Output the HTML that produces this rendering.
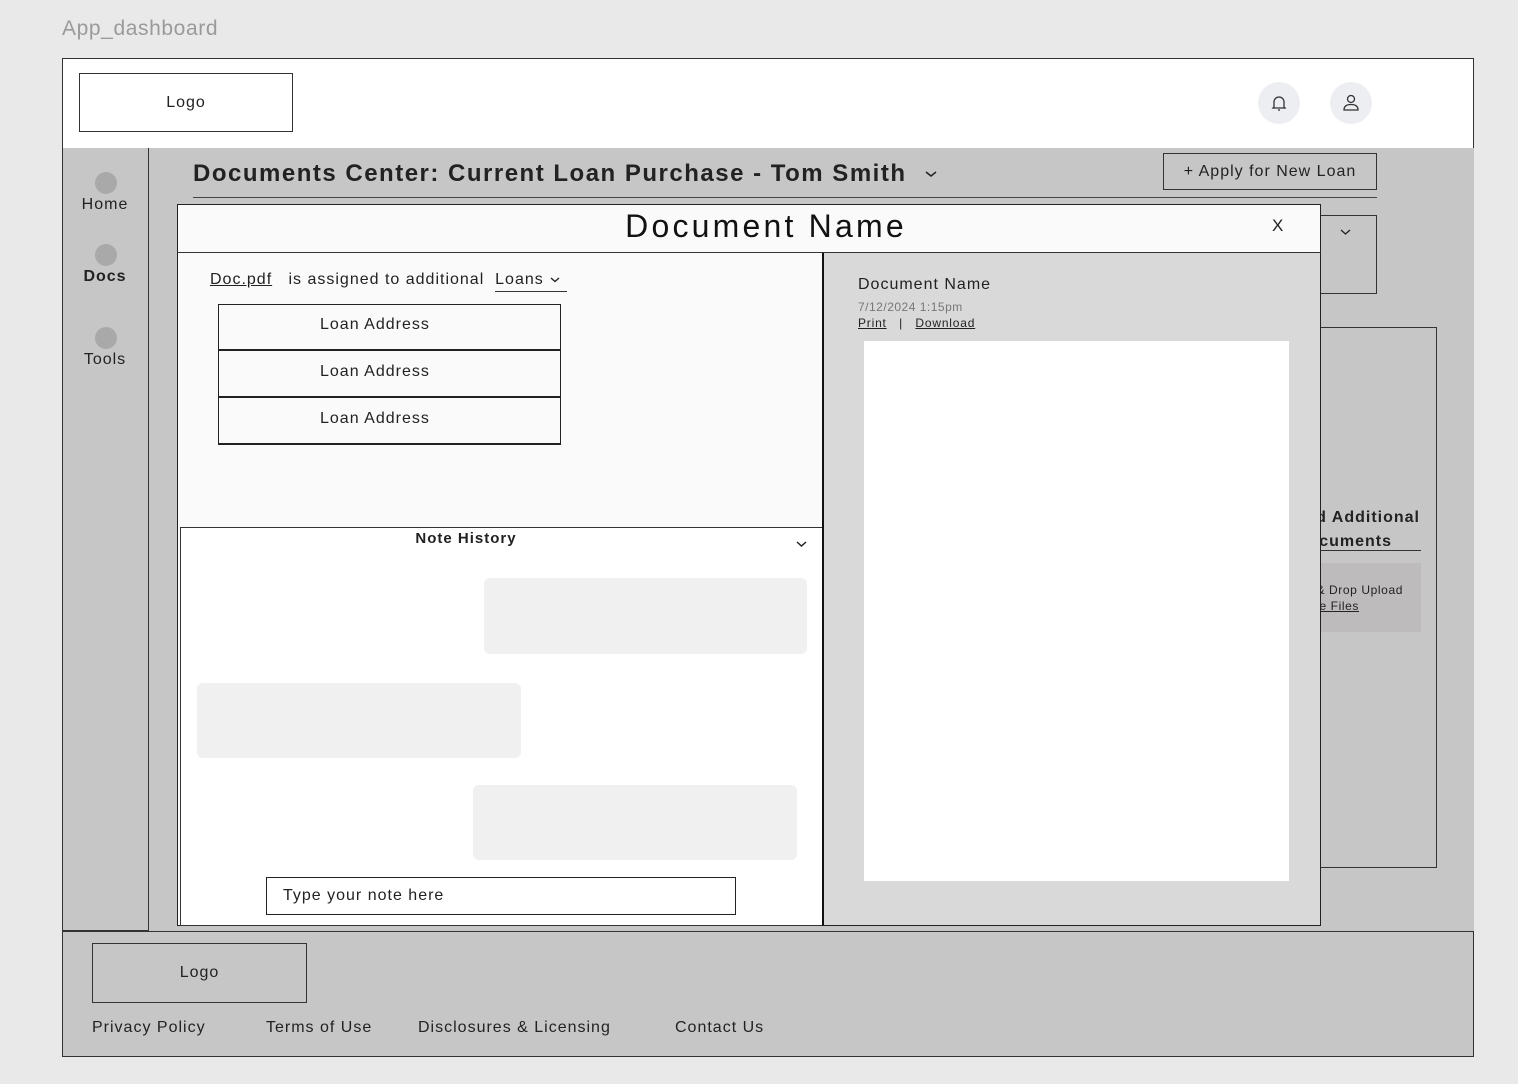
<!DOCTYPE html>
<html><head><meta charset="utf-8"><style>
*{box-sizing:border-box;margin:0;padding:0}
body{width:1518px;height:1084px;background:#e9e9e9;font-family:"Liberation Sans",sans-serif;color:#222;position:relative;overflow:hidden;letter-spacing:1px}
.a{position:absolute}
.c{display:flex;align-items:center;justify-content:center}
.r{white-space:nowrap}
</style></head><body>
<div class="a" style="left:62px;top:17px;font-size:21px;color:#9a9a9a;letter-spacing:0.6px">App_dashboard</div>
<!-- header -->
<div class="a" style="left:62px;top:58px;width:1412px;height:91px;background:#fff;border:1px solid #333"></div>
<div class="a c" style="left:79px;top:73px;width:214px;height:59px;border:1px solid #333;font-size:16px">Logo</div>
<div class="a c" style="left:1258px;top:82px;width:42px;height:42px;border-radius:50%;background:#eceef2">
<svg width="16" height="17" viewBox="0 0 16 17" fill="none" stroke="#333" stroke-width="1.3"><path d="M3 12V7a5 5 0 0 1 10 0v5l1 1H2z"/><path d="M7 15h2"/></svg></div>
<div class="a c" style="left:1330px;top:82px;width:42px;height:42px;border-radius:50%;background:#eceef2">
<svg width="18" height="18" viewBox="0 0 18 18" fill="none" stroke="#333" stroke-width="1.3"><circle cx="9" cy="5" r="3.5"/><path d="M2 16c0-4 3-5.5 7-5.5s7 1.5 7 5.5z"/></svg></div>
<!-- main -->
<div class="a" style="left:62px;top:148px;width:1412px;height:783px;background:#c6c6c6"></div>
<div class="a" style="left:62px;top:148px;width:87px;height:783px;border:1px solid #333;border-top:none"></div>
<div class="a" style="left:95px;top:172px;width:22px;height:22px;border-radius:50%;background:#a9a9a9"></div>
<div class="a" style="left:62px;top:196px;width:86px;text-align:center;font-size:16px">Home</div>
<div class="a" style="left:95px;top:244px;width:22px;height:22px;border-radius:50%;background:#a9a9a9"></div>
<div class="a" style="left:62px;top:268px;width:86px;text-align:center;font-size:16px;font-weight:bold">Docs</div>
<div class="a" style="left:95px;top:327px;width:22px;height:22px;border-radius:50%;background:#a9a9a9"></div>
<div class="a" style="left:62px;top:351px;width:86px;text-align:center;font-size:16px">Tools</div>
<div class="a r" style="left:193px;top:160px;font-size:24px;font-weight:bold;color:#222;letter-spacing:1.5px">Documents Center: Current Loan Purchase - Tom Smith</div>
<svg class="a" style="left:924px;top:169px" width="14" height="10" viewBox="0 0 14 10" fill="none" stroke="#222" stroke-width="1.5"><path d="M2 3l5 4 5-4"/></svg>
<div class="a" style="left:193px;top:197px;width:1184px;height:1px;background:#444"></div>
<div class="a c" style="left:1163px;top:153px;width:214px;height:37px;border:1px solid #333;font-size:16px">+ Apply for New Loan</div>
<div class="a" style="left:1200px;top:215px;width:177px;height:79px;border:1px solid #333"></div>
<svg class="a" style="left:1339px;top:228px" width="13" height="9" viewBox="0 0 13 9" fill="none" stroke="#222" stroke-width="1.3"><path d="M2 2l4.5 4 4.5-4"/></svg>
<div class="a" style="left:1200px;top:327px;width:237px;height:541px;border:1px solid #333"></div>
<div class="a r" style="right:98px;top:506px;font-size:16px;font-weight:bold;line-height:24px">Add Additional</div>
<div class="a r" style="right:126px;top:530px;font-size:16px;font-weight:bold;line-height:24px">Documents</div>
<div class="a" style="left:1240px;top:550px;width:181px;height:1px;background:#333"></div>
<div class="a" style="left:1240px;top:563px;width:181px;height:69px;background:#bdbbbc"></div>
<div class="a r" style="right:115px;top:582px;font-size:12px;line-height:16px;letter-spacing:0.6px">Drag &amp; Drop Upload</div>
<div class="a r" style="right:159px;top:598px;font-size:12px;line-height:16px;letter-spacing:0.6px"><u>Browse Files</u></div>
<!-- modal -->
<div class="a" style="left:177px;top:204px;width:1144px;height:722px;background:#fafafa;border:1px solid #222"></div>
<div class="a" style="left:177px;top:252px;width:1144px;height:1px;background:#333"></div>
<div class="a r" style="left:177px;top:208px;width:1178px;text-align:center;font-size:32px;color:#111;letter-spacing:3.2px">Document Name</div>
<div class="a" style="left:1272px;top:216px;font-size:17px">X</div>
<div class="a r" style="left:210px;top:271px;font-size:16px"><u>Doc.pdf</u>&nbsp;&nbsp; is assigned to additional&nbsp;&nbsp;<span style="border-bottom:1px solid #333;padding-bottom:2px;display:inline-block">Loans <svg width="12" height="8" viewBox="0 0 12 8" fill="none" stroke="#222" stroke-width="1.4"><path d="M2 2l4 3.5 4-3.5"/></svg>&nbsp;</span></div>
<div class="a" style="left:218px;top:304px;width:343px;height:47px;border:1.5px solid #222;border-bottom-width:2px;font-size:16px;padding-left:101px;padding-top:11px">Loan Address</div>
<div class="a" style="left:218px;top:350px;width:343px;height:48px;border:1.5px solid #222;border-bottom-width:2px;font-size:16px;padding-left:101px;padding-top:12px">Loan Address</div>
<div class="a" style="left:218px;top:397px;width:343px;height:48px;border:1.5px solid #222;border-bottom-width:2px;font-size:16px;padding-left:101px;padding-top:12px">Loan Address</div>
<!-- note history -->
<div class="a" style="left:180px;top:527px;width:643px;height:399px;background:#fff;border:1px solid #333"></div>
<div class="a" style="left:180px;top:530px;width:572px;text-align:center;font-size:15px;font-weight:bold">Note History</div>
<svg class="a" style="left:795px;top:540px" width="13" height="9" viewBox="0 0 13 9" fill="none" stroke="#222" stroke-width="1.5"><path d="M2 2l4.5 4 4.5-4"/></svg>
<div class="a" style="left:484px;top:578px;width:323px;height:76px;background:#f0f0f0;border-radius:6px"></div>
<div class="a" style="left:197px;top:683px;width:324px;height:75px;background:#f0f0f0;border-radius:6px"></div>
<div class="a" style="left:473px;top:785px;width:324px;height:75px;background:#f0f0f0;border-radius:6px"></div>
<div class="a" style="left:266px;top:877px;width:470px;height:38px;border:1px solid #222;font-size:16px;padding:9px 0 0 16px">Type your note here</div>
<!-- viewer -->
<div class="a" style="left:822px;top:253px;width:499px;height:673px;background:#d9d9d9;border-left:2px solid #111;border-right:1px solid #222;border-bottom:1px solid #222"></div>
<div class="a" style="left:858px;top:276px;font-size:16px">Document Name</div>
<div class="a" style="left:858px;top:300px;font-size:12px;color:#777;letter-spacing:0.5px">7/12/2024 1:15pm</div>
<div class="a" style="left:858px;top:316px;font-size:12px;letter-spacing:0.8px"><u>Print</u>&nbsp;&nbsp; | &nbsp;&nbsp;<u>Download</u></div>
<div class="a" style="left:864px;top:341px;width:425px;height:540px;background:#fff"></div>
<!-- footer -->
<div class="a" style="left:62px;top:931px;width:1412px;height:126px;background:#c6c6c6;border:1px solid #333"></div>
<div class="a c" style="left:92px;top:943px;width:215px;height:60px;border:1px solid #333;font-size:16px">Logo</div>
<div class="a r" style="left:92px;top:1019px;font-size:16px">Privacy Policy</div>
<div class="a r" style="left:266px;top:1019px;font-size:16px">Terms of Use</div>
<div class="a r" style="left:418px;top:1019px;font-size:16px">Disclosures &amp; Licensing</div>
<div class="a r" style="left:675px;top:1019px;font-size:16px">Contact Us</div>
</body></html>
